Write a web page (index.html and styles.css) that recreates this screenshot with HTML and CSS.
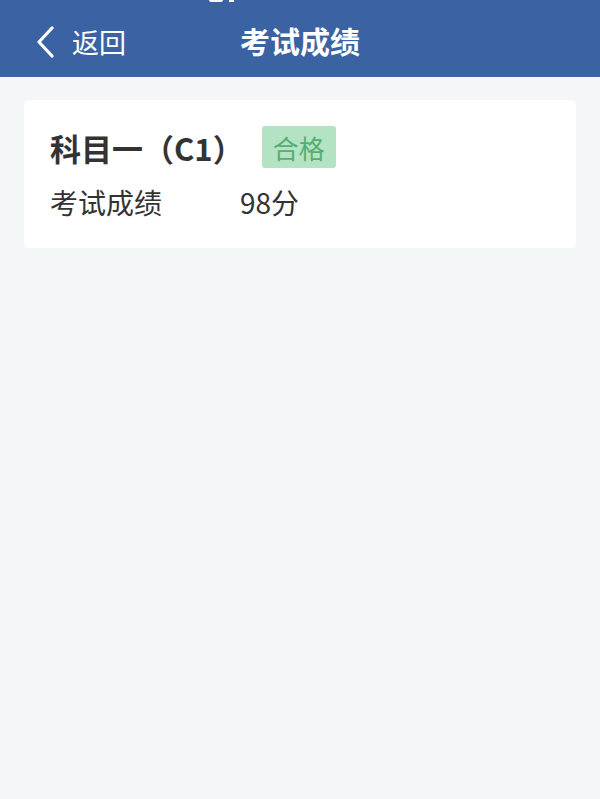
FILE: index.html
```html
<!DOCTYPE html>
<html>
  <head>
    <title>考试成绩</title>
    <link rel="stylesheet" href="styles.css">
    <meta name="viewport" content="width=device-width, initial-scale=1.0" />
  </head>
  <body>
    <div class="header">
      <div class="status-bits"><span class="bit-a"></span><span class="bit-b"></span></div>
      <a class="back" href="#">
        <svg class="chevron" width="20" height="32" viewBox="0 0 20 32">
          <polyline points="16,2 3,16 16,30" fill="none" stroke="#fff" stroke-width="3.2" stroke-linecap="round" stroke-linejoin="round" />
        </svg>
        <span>返回</span>
      </a>
      <h1 class="title">考试成绩</h1>
    </div>
    <div class="card">
      <div class="card-head">
        <span class="subject">科目一（C1）</span>
        <span class="badge">合格</span>
      </div>
      <div class="row">
        <span class="label">考试成绩</span>
        <span class="value">98分</span>
      </div>
    </div>
  </body>
</html>
```

FILE: styles.css
```css
body {
  margin: 0;
  background: #f4f7f8;
  font-family: "Noto Sans CJK SC", "Noto Sans", sans-serif;
  color: #333333;
}
.header {
  position: relative;
  height: 77px;
  background: #3b63a3;
  display: flex;
  align-items: center;
  justify-content: center;
}
.status-bits {
  position: absolute;
  top: 0;
  left: 209px;
  display: flex;
  gap: 6px;
}
.bit-a {
  width: 14px;
  height: 2px;
  background: #ffffff;
  border-radius: 0 0 2px 2px;
}
.bit-b {
  width: 5px;
  height: 2px;
  background: #ffffff;
}
.back {
  position: absolute;
  left: 36px;
  top: 3px;
  height: 77px;
  display: flex;
  align-items: center;
  gap: 16px;
  color: #ffffff;
  text-decoration: none;
  font-size: 27px;
}
.chevron {
  display: block;
}
.title {
  margin: 3px 0 0 0;
  font-size: 30px;
  font-weight: bold;
  color: #ffffff;
}
.card {
  margin: 23px 24px 0;
  background: #ffffff;
  border-radius: 4px;
  padding: 26px 26px 28px;
  height: 94px;
}
.card-head {
  display: flex;
  align-items: center;
  gap: 18px;
  height: 42px;
}
.subject {
  font-size: 31px;
  font-weight: bold;
}
.badge {
  display: flex;
  align-items: center;
  justify-content: center;
  width: 74px;
  height: 42px;
  background: #b3e3c3;
  color: #56ad74;
  font-size: 26px;
  border-radius: 3px;
}
.row {
  display: flex;
  align-items: center;
  margin-top: 14px;
  font-size: 28px;
}
.label {
  width: 190px;
}
```
